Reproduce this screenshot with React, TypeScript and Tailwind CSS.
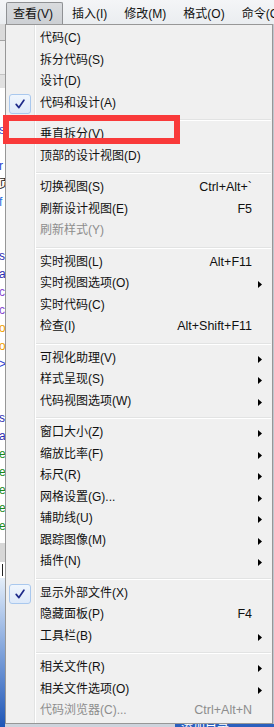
import type { ReactNode } from 'react';

type MenuItem = {
  label: string;
  shortcut?: string;
  sub?: boolean;
  checked?: boolean;
  disabled?: boolean;
};

const GROUPS: MenuItem[][] = [
  [
    { label: '代码(C)' },
    { label: '拆分代码(S)' },
    { label: '设计(D)' },
    { label: '代码和设计(A)', checked: true }
  ],
  [{ label: '垂直拆分(V)' }, { label: '顶部的设计视图(D)' }],
  [
    { label: '切换视图(S)', shortcut: 'Ctrl+Alt+`' },
    { label: '刷新设计视图(E)', shortcut: 'F5' },
    { label: '刷新样式(Y)', disabled: true }
  ],
  [
    { label: '实时视图(L)', shortcut: 'Alt+F11' },
    { label: '实时视图选项(O)', sub: true },
    { label: '实时代码(C)' },
    { label: '检查(I)', shortcut: 'Alt+Shift+F11' }
  ],
  [
    { label: '可视化助理(V)', sub: true },
    { label: '样式呈现(S)', sub: true },
    { label: '代码视图选项(W)', sub: true }
  ],
  [
    { label: '窗口大小(Z)', sub: true },
    { label: '缩放比率(F)', sub: true },
    { label: '标尺(R)', sub: true },
    { label: '网格设置(G)...', sub: true },
    { label: '辅助线(U)', sub: true },
    { label: '跟踪图像(M)', sub: true },
    { label: '插件(N)', sub: true }
  ],
  [
    { label: '显示外部文件(X)', checked: true },
    { label: '隐藏面板(P)', shortcut: 'F4' },
    { label: '工具栏(B)', sub: true }
  ],
  [
    { label: '相关文件(R)', sub: true },
    { label: '相关文件选项(O)', sub: true },
    { label: '代码浏览器(C)...', shortcut: 'Ctrl+Alt+N', disabled: true }
  ]
];

// glyph fragments of the code view peeking out left of the menu, one per 18px line
const CODE_EDGE: [string, string][] = [
  ['s', 'text-[#2a3fd0]'],
  ['', ''],
  ['r', 'text-[#2a3fd0]'],
  ['页', 'text-[#222]'],
  ['f', 'text-[#1f6fe0]'],
  ['', ''],
  ['', ''],
  ['s', 'text-[#2b2bb0]'],
  ['a', 'text-[#2b2bb0]'],
  ['c', 'text-[#8a4ad0]'],
  ['c', 'text-[#8a4ad0]'],
  ['o', 'text-[#f0a000]'],
  ['o', 'text-[#f0a000]'],
  ['>', 'text-[#2a3fd0]'],
  ['', ''],
  ['', ''],
  ['s', 'text-[#2b2bb0]'],
  ['a', 'text-[#2b2bb0]'],
  ['e', 'text-[#1a8a1a]'],
  ['e', 'text-[#1a8a1a]'],
  ['e', 'text-[#1a8a1a]'],
  ['e', 'text-[#1a8a1a]'],
  ['e', 'text-[#1a8a1a]']
];

function CheckIcon() {
  return (
    <svg aria-hidden="true" width="10" height="10" viewBox="0 0 10 10">
      <path d="M1.2 5.4 3.9 8.6 8.9 1.2" fill="none" stroke="#1f2b8a" strokeWidth="1.7" strokeLinecap="round" strokeLinejoin="round" />
    </svg>
  );
}

function SubArrow() {
  return (
    <svg aria-hidden="true" width="4" height="7" viewBox="0 0 4 7">
      <polygon points="0,0 4,3.5 0,7" fill="#000" />
    </svg>
  );
}

function Gutter({ children }: { children?: ReactNode }) {
  return (
    <>
      <div className="flex h-full w-[28px] shrink-0 items-center justify-center">{children}</div>
      <div className="h-full w-px shrink-0 bg-[#e2e3e3]" />
      <div className="h-full w-px shrink-0 bg-white" />
    </>
  );
}

function MenuRow({ item }: { item: MenuItem }) {
  const tone = item.disabled ? 'text-[#8d8d8d]' : 'text-[#111]';
  return (
    <div className="flex h-[21.5px] items-center">
      <Gutter>
        {item.checked ? (
          <div className="flex h-[20px] w-[22px] items-center justify-center rounded-[3px] border border-[#a9c8ee] bg-gradient-to-b from-[#f0f6fd] to-[#dde9f9]">
            <CheckIcon />
          </div>
        ) : null}
      </Gutter>
      <span className={`flex-1 whitespace-nowrap pb-[3px] pl-[4px] text-[12px] leading-[18px] ${tone}`}>{item.label}</span>
      {item.shortcut ? (
        <span className={`whitespace-nowrap pb-[3px] text-[12.5px] leading-[18px] ${tone}`}>{item.shortcut}</span>
      ) : null}
      <div className="flex h-full w-[20px] shrink-0 items-center pl-[6px]">{item.sub ? <SubArrow /> : null}</div>
    </div>
  );
}

function Separator() {
  return (
    <div className="flex h-[10px] items-center">
      <Gutter />
      <div className="mr-px flex-1 border-b border-white bg-[#e2e3e3] pt-px" />
    </div>
  );
}

function CodeEdge() {
  return (
    <div className="flex w-[5px] shrink-0 flex-col overflow-hidden">
      <div className="h-[16px] shrink-0 bg-[#dadada]" />
      <div className="h-px shrink-0 bg-[#a3a3a3]" />
      <div className="h-[33px] shrink-0 bg-[#ededed]" />
      <div className="h-[14px] shrink-0 border-t border-[#c4c4c4] bg-[#e1e1e1]" />
      <div className="h-[455px] shrink-0 bg-white pt-[33px]">
        {CODE_EDGE.map(([ch, color], i) => (
          <div key={i} className={`-ml-px h-[18px] whitespace-nowrap text-[12px] leading-[18px] ${color}`}>
            {ch}
          </div>
        ))}
      </div>
      <div className="h-[19px] shrink-0 bg-[#d7d7d7]" />
      <div className="h-[16px] shrink-0 bg-white pl-[2px] pt-[2px]">
        <div className="h-[12px] w-px bg-[#222]" />
      </div>
      <div className="flex-1 bg-gradient-to-b from-[#e4eef9] to-[#1d55b6]" />
    </div>
  );
}

const BAR = ['插入(I)', '修改(M)', '格式(O)', '命令(C)'];

export default function App() {
  return (
    <div className="relative flex h-[727px] w-[274px] flex-col overflow-hidden bg-[#eef0f2] font-['Liberation_Sans','Noto_Sans_CJK_SC',sans-serif]">
      <div className="flex h-[24px] shrink-0 items-end whitespace-nowrap bg-gradient-to-b from-[#f4f5f7] to-[#eaedf0] pl-[6px] text-[12px] text-[#111]">
        <div className="flex h-[22px] items-center rounded-t-[2px] border border-b-0 border-[#8f9194] bg-gradient-to-b from-[#d9dbde] to-[#cdd0d4] pb-px pl-[6px] pr-[9px] pt-[2px]">
          查看(V)
        </div>
        {BAR.map((label, i) => (
          <div key={label} className={`flex h-[22px] items-center pt-[2px] ${i === 0 ? 'ml-[9px]' : 'ml-[17px]'}`}>
            {label}
          </div>
        ))}
      </div>

      <div className="flex min-h-0 flex-1">
        <CodeEdge />
        <div className="flex flex-1 flex-col bg-[#bfc6cf]">
          <div className="w-[268px] shrink-0 border border-[#979797] bg-[#f0f0f0]">
            <div className="flex h-[4px]">
              <Gutter />
            </div>
            {GROUPS.map((group, gi) => (
              <div key={gi}>
                {gi > 0 ? <Separator /> : null}
                {group.map((item) => (
                  <MenuRow key={item.label} item={item} />
                ))}
              </div>
            ))}
          </div>
          <div className="flex min-h-0 flex-1">
            <div className="w-[170px] bg-[#cdd3dc]" />
            <div className="flex-1 overflow-hidden bg-[#2a5fbe] pl-[6px] text-[12px] leading-[8px] text-white">添加目录</div>
          </div>
        </div>
      </div>

      {/* annotation box drawn over the screenshot */}
      <div className="absolute left-[3px] top-[115px] box-border h-[29px] w-[177px] border-[6px] border-solid border-[#f93a3a]" />
    </div>
  );
}
